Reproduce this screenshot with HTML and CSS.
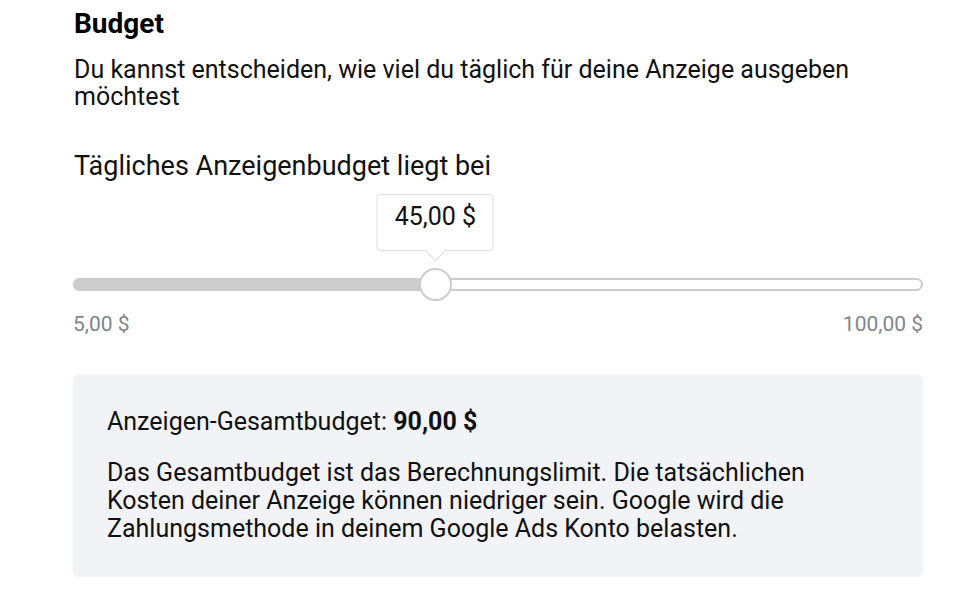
FILE: index.html
```html
<!DOCTYPE html>
<html lang="de">
<head>
<meta charset="utf-8">
<link rel="stylesheet" href="styles.css">
</head>
<body>
<main class="budget">
  <h2 class="title">Budget</h2>
  <p class="desc">Du kannst entscheiden, wie viel du täglich für deine Anzeige ausgeben möchtest</p>
  <div class="label">Tägliches Anzeigenbudget liegt bei</div>
  <div class="slider">
    <div class="track">
      <div class="fill" style="width: 42.6%"></div>
      <div class="thumb" style="left: 42.6%">
        <div class="tip">45,00 $</div>
      </div>
    </div>
    <div class="range">
      <span>5,00 $</span>
      <span>100,00 $</span>
    </div>
  </div>
  <section class="info">
    <p class="total">Anzeigen-Gesamtbudget: <strong>90,00 $</strong></p>
    <p class="note">Das Gesamtbudget ist das Berechnungslimit. Die tatsächlichen Kosten deiner Anzeige können niedriger sein. Google wird die Zahlungsmethode in deinem Google Ads Konto belasten.</p>
  </section>
</main>
</body>
</html>
```

FILE: styles.css
```css
html, body {
  margin: 0;
  padding: 0;
  background: #ffffff;
}
body {
  font-family: Roboto, "Liberation Sans", sans-serif;
  color: #111111;
}
.budget {
  width: 850px;
  margin-left: 73px;
  padding-top: 7px;
}
.title {
  margin: 0 0 0 1px;
  font-size: 28px;
  line-height: 33px;
  font-weight: 700;
  color: #000;
}
.desc {
  margin: 16px 0 0 1px;
  font-size: 25px;
  line-height: 27px;
  width: 800px;
}
.label {
  margin: 40px 0 0 1px;
  font-size: 27px;
  line-height: 32px;
}
.slider {
  margin-top: 96px;
}
.track {
  position: relative;
  height: 13px;
  box-sizing: border-box;
  border: 2px solid #cccccc;
  border-radius: 7px;
  background: #fff;
}
.fill {
  position: absolute;
  left: -2px;
  top: -2px;
  bottom: -2px;
  background: #cccccc;
  border-radius: 7px 0 0 7px;
}
.thumb {
  position: absolute;
  top: 50%;
  width: 33px;
  height: 33px;
  box-sizing: border-box;
  margin: -16.5px 0 0 -16.5px;
  border: 2px solid #cccccc;
  border-radius: 50%;
  background: #fff;
}
.tip {
  position: absolute;
  bottom: 48px;
  left: 50%;
  transform: translateX(-50%);
  width: 117px;
  height: 57px;
  box-sizing: border-box;
  padding-top: 7px;
  border: 1px solid #dddddd;
  border-radius: 4px;
  background: #fff;
  font-size: 25px;
  line-height: 30px;
  text-align: center;
  color: #111;
}
.tip::after {
  content: "";
  position: absolute;
  left: 50%;
  bottom: -8px;
  width: 15px;
  height: 15px;
  margin-left: -7.5px;
  background: #fff;
  border-right: 1px solid #dddddd;
  border-bottom: 1px solid #dddddd;
  transform: rotate(45deg);
}
.range {
  display: flex;
  justify-content: space-between;
  margin-top: 21px;
  font-size: 21px;
  line-height: 24px;
  color: #80868b;
}
.info {
  margin-top: 38px;
  background: #f2f3f7;
  border-radius: 6px;
  padding: 33px 34px 33px;
  height: 203px;
  box-sizing: border-box;
}
.info p {
  margin: 0;
}
.total {
  font-size: 25px;
  line-height: 30px;
}
.total strong {
  font-weight: 700;
}
.note {
  margin-top: 22px !important;
  font-size: 25px;
  line-height: 28px;
  width: 740px;
}
```
